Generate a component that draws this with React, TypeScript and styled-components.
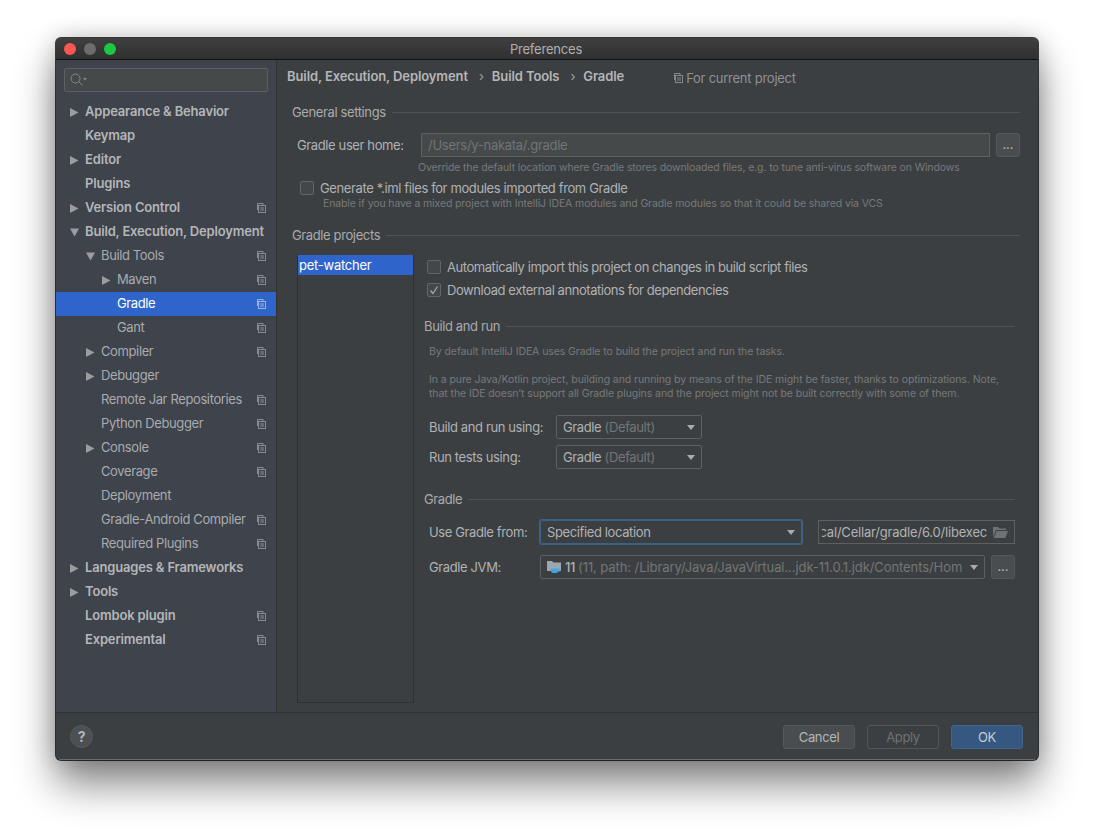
import styled, { createGlobalStyle } from "styled-components";

const GlobalStyle = createGlobalStyle`
  html, body {
    margin: 0;
    padding: 0;
    background: #ffffff;
    height: 100%;
    overflow: hidden;
  }
  #root {
    padding: 38px 0 0 56px;
    font-family: Inter, "Liberation Sans", sans-serif;
    font-size: 13px;
    letter-spacing: -0.38px;
  }
  * {
    box-sizing: border-box;
  }
`;

interface TreeItem {
  label: string;
  depth: number;
  arrow?: "right" | "down";
  copy?: boolean;
  bold?: boolean;
  selected?: boolean;
}

const treeItems: TreeItem[] = [
  { label: "Appearance & Behavior", depth: 0, arrow: "right", bold: true },
  { label: "Keymap", depth: 0, bold: true },
  { label: "Editor", depth: 0, arrow: "right", bold: true },
  { label: "Plugins", depth: 0, bold: true },
  { label: "Version Control", depth: 0, arrow: "right", bold: true, copy: true },
  { label: "Build, Execution, Deployment", depth: 0, arrow: "down", bold: true },
  { label: "Build Tools", depth: 1, arrow: "down", copy: true },
  { label: "Maven", depth: 2, arrow: "right", copy: true },
  { label: "Gradle", depth: 2, copy: true, selected: true },
  { label: "Gant", depth: 2, copy: true },
  { label: "Compiler", depth: 1, arrow: "right", copy: true },
  { label: "Debugger", depth: 1, arrow: "right" },
  { label: "Remote Jar Repositories", depth: 1, copy: true },
  { label: "Python Debugger", depth: 1, copy: true },
  { label: "Console", depth: 1, arrow: "right", copy: true },
  { label: "Coverage", depth: 1, copy: true },
  { label: "Deployment", depth: 1 },
  { label: "Gradle-Android Compiler", depth: 1, copy: true },
  { label: "Required Plugins", depth: 1, copy: true },
  { label: "Languages & Frameworks", depth: 0, arrow: "right", bold: true },
  { label: "Tools", depth: 0, arrow: "right", bold: true },
  { label: "Lombok plugin", depth: 0, bold: true, copy: true },
  { label: "Experimental", depth: 0, bold: true, copy: true },
];

const CopyIcon = ({ color = "#8a8d90" }: { color?: string }) => (
  <svg width="10" height="10" viewBox="0 0 10 10" fill="none" stroke={color} strokeWidth="1">
    <path d="M1.5 7V.5H7V2" />
    <rect x="2.5" y="2.5" width="7" height="7" />
    <path d="M4 5h4M4 7h4" />
  </svg>
);

const Arrow = ({ dir }: { dir: "right" | "down" }) => (
  <svg width="9" height="9" viewBox="0 0 9 9" fill="#9a9c9e">
    {dir === "right" ? <path d="M0 0 8.5 4.5 0 9z" /> : <path d="M0 .5h9L4.5 8.5z" />}
  </svg>
);

const Caret = () => (
  <svg width="8" height="5" viewBox="0 0 8 5" fill="#a9abad">
    <path d="M0 0h8L4 5z" />
  </svg>
);

const TreeRow = ({ item }: { item: TreeItem }) => (
  <Row $depth={item.depth} $selected={item.selected}>
    <ArrowSlot>{item.arrow && <Arrow dir={item.arrow} />}</ArrowSlot>
    <RowLabel $bold={item.bold} $selected={item.selected}>
      {item.label}
    </RowLabel>
    {item.copy && (
      <CopySlot>
        <CopyIcon color={item.selected ? "#9db4d8" : "#8a8d90"} />
      </CopySlot>
    )}
  </Row>
);

export default function App() {
  return (
    <>
      <GlobalStyle />
      <Window>
        <TitleBar>
          <Lights>
            <Light $color="#fc5753" />
            <Light $color="#6b6c6e" />
            <Light $color="#1ac841" />
          </Lights>
          Preferences
        </TitleBar>
        <Body>
          <Sidebar>
            <SearchBox>
              <svg width="17" height="14" viewBox="0 0 17 14" fill="none" stroke="#85888b" strokeWidth="1">
                <circle cx="5.5" cy="5.5" r="4.5" />
                <path d="M8.8 8.8 12.5 12.5" />
                <path d="M13 5h4l-2 2.4z" fill="#85888b" stroke="none" />
              </svg>
            </SearchBox>
            <Tree>
              {treeItems.map((item) => (
                <TreeRow key={item.label} item={item} />
              ))}
            </Tree>
          </Sidebar>
          <Main>
            <Breadcrumb>
              <Crumb>Build, Execution, Deployment</Crumb>
              <Sep>›</Sep>
              <Crumb>Build Tools</Crumb>
              <Sep>›</Sep>
              <Crumb>Gradle</Crumb>
              <ForProject>
                <CopyIcon color="#85888b" />
                For current project
              </ForProject>
            </Breadcrumb>

            <SectionTitle $top={12} $left={5}>General settings</SectionTitle>
            <HomeRow>
              <HomeLabel>Gradle user home:</HomeLabel>
              <DisabledInput>/Users/y-nakata/.gradle</DisabledInput>
              <DotsButton>...</DotsButton>
            </HomeRow>
            <Hint $left={131} $top={3}>
              Override the default location where Gradle stores downloaded files, e.g. to tune anti-virus software on Windows
            </Hint>
            <GenerateRow>
              <CheckBox />
              Generate *.iml files for modules imported from Gradle
            </GenerateRow>
            <Hint $left={36} $top={0}>
              Enable if you have a mixed project with IntelliJ IDEA modules and Gradle modules so that it could be shared via VCS
            </Hint>

            <SectionTitle $top={17} $left={5}>Gradle projects</SectionTitle>
            <Projects>
              <ProjectList>
                <ProjectItem>pet-watcher</ProjectItem>
              </ProjectList>
              <ProjectPane>
                <CheckRow>
                  <CheckBox />
                  Automatically import this project on changes in build script files
                </CheckRow>
                <CheckRow>
                  <CheckBox>
                    <svg width="10" height="10" viewBox="0 0 10 10" fill="none" stroke="#a9abad" strokeWidth="1.2">
                      <path d="M1.5 5.5 4 8.5 8.5 1.5" />
                    </svg>
                  </CheckBox>
                  Download external annotations for dependencies
                </CheckRow>

                <SectionTitle $top={17} $left={0}>Build and run</SectionTitle>
                <Description $top={11}>By default IntelliJ IDEA uses Gradle to build the project and run the tasks.</Description>
                <Description $top={14}>
                  In a pure Java/Kotlin project, building and running by means of the IDE might be faster, thanks to optimizations. Note,
                  <br />
                  that the IDE doesn’t support all Gradle plugins and the project might not be built correctly with some of them.
                </Description>

                <FormRow $top={14}>
                  <FormLabel $width={127}>Build and run using:</FormLabel>
                  <Select $width={146}>
                    <span>
                      Gradle <Muted>(Default)</Muted>
                    </span>
                    <Caret />
                  </Select>
                </FormRow>
                <FormRow $top={6}>
                  <FormLabel $width={127}>Run tests using:</FormLabel>
                  <Select $width={146}>
                    <span>
                      Gradle <Muted>(Default)</Muted>
                    </span>
                    <Caret />
                  </Select>
                </FormRow>

                <SectionTitle $top={22} $left={0}>Gradle</SectionTitle>
                <FormRow $top={13}>
                  <FormLabel $width={111}>Use Gradle from:</FormLabel>
                  <Select $width={262} $focused>
                    <span>Specified location</span>
                    <Caret />
                  </Select>
                  <PathInput>
                    <PathText>
                      <span>/usr/local/Cellar/gradle/6.0/libexec</span>
                    </PathText>
                    <svg width="15" height="12" viewBox="0 0 15 12" fill="#6e7275">
                      <path d="M0 1h5l1.5 1.5H13V4H3L0 11z" />
                      <path d="M3.6 5H15l-2.6 7H.8z" />
                    </svg>
                  </PathInput>
                </FormRow>
                <FormRow $top={11}>
                  <FormLabel $width={111}>Gradle JVM:</FormLabel>
                  <JvmSelect>
                    <JvmText>
                      <svg width="15" height="14" viewBox="0 0 15 14">
                        <path d="M0 1h5l1.5 1.5H14V11H0z" fill="#9aa7b0" />
                        <path d="M4 8.5h7v2.5a2 2 0 0 1-2 2H6a2 2 0 0 1-2-2z" fill="#3ea6e0" />
                        <path d="M11 9h2v2h-2" fill="none" stroke="#3ea6e0" />
                      </svg>
                      <strong>11</strong>
                      <JvmPath>(11, path: /Library/Java/JavaVirtual...jdk-11.0.1.jdk/Contents/Hom</JvmPath>
                    </JvmText>
                    <Caret />
                  </JvmSelect>
                  <DotsButton>...</DotsButton>
                </FormRow>
              </ProjectPane>
            </Projects>
          </Main>
        </Body>
        <Footer>
          <HelpButton>?</HelpButton>
          <Buttons>
            <DialogButton>Cancel</DialogButton>
            <DialogButton $variant="disabled">Apply</DialogButton>
            <DialogButton $variant="primary">OK</DialogButton>
          </Buttons>
        </Footer>
      </Window>
    </>
  );
}

const Window = styled.div`
  width: 982px;
  height: 722px;
  border-radius: 5px;
  overflow: hidden;
  background: #3c3f41;
  box-shadow: 0 0 0 1px rgba(0, 0, 0, 0.75), 0 24px 40px rgba(0, 0, 0, 0.48), 0 0 24px rgba(0, 0, 0, 0.2);
  display: flex;
  flex-direction: column;
  color: #b2b4b6;
`;

const TitleBar = styled.div`
  position: relative;
  height: 22px;
  flex: none;
  background: linear-gradient(#3f3f3f, #303030);
  border-bottom: 1px solid #111;
  color: #b0b0b0;
  display: flex;
  align-items: center;
  justify-content: center;
  padding-right: 2px;
  font-size: 13px;
  letter-spacing: -0.2px;
`;

const Lights = styled.div`
  position: absolute;
  left: 8px;
  top: 5px;
  display: flex;
  gap: 8px;
`;

const Light = styled.span<{ $color: string }>`
  width: 12px;
  height: 12px;
  border-radius: 50%;
  background: ${(p) => p.$color};
`;

const Body = styled.div`
  display: flex;
  height: 652px;
  flex: none;
`;

const Sidebar = styled.div`
  width: 221px;
  flex: none;
  background: #3e434c;
  border-right: 1px solid #323232;
  padding-top: 8px;
`;

const SearchBox = styled.div`
  width: 204px;
  height: 24px;
  margin-left: 8px;
  border: 1px solid #5c6064;
  border-radius: 2px;
  background: #45494a;
  display: flex;
  align-items: center;
  padding-left: 5px;
`;

const Tree = styled.div`
  margin-top: 8px;
`;

const Row = styled.div<{ $depth: number; $selected?: boolean }>`
  height: 24px;
  width: 220px;
  display: flex;
  align-items: center;
  padding-left: ${(p) => 14 + p.$depth * 16}px;
  background: ${(p) => (p.$selected ? "#2f65ca" : "transparent")};
`;

const ArrowSlot = styled.span`
  width: 15px;
  flex: none;
  display: flex;
  align-items: center;
`;

const RowLabel = styled.span<{ $bold?: boolean; $selected?: boolean }>`
  font-weight: ${(p) => (p.$bold ? 600 : 400)};
  letter-spacing: ${(p) => (p.$bold ? "-0.17px" : "-0.38px")};
  color: ${(p) => (p.$selected ? "#ffffff" : p.$bold ? "#b4b6b8" : "#a9abad")};
  white-space: nowrap;
  position: relative;
  top: -1px;
`;

const CopySlot = styled.span`
  margin-left: auto;
  margin-right: 10px;
  display: flex;
`;

const Main = styled.div`
  flex: 1;
  min-width: 0;
  padding: 0 18px 0 10px;
  display: flex;
  flex-direction: column;
`;

const Breadcrumb = styled.div`
  height: 32px;
  flex: none;
  display: flex;
  align-items: center;
  font-weight: 600;
  letter-spacing: -0.1px;
`;

const Crumb = styled.span`
  color: #b4b6b8;
`;

const Sep = styled.span`
  margin: 0 8px 0 11px;
  font-weight: 400;
  color: #a0a2a4;
`;

const ForProject = styled.span`
  display: flex;
  align-items: center;
  gap: 3px;
  margin-left: 49px;
  font-weight: 400;
  letter-spacing: -0.25px;
  color: #8f9194;
  position: relative;
  top: 2px;
`;

const SectionTitle = styled.div<{ $top: number; $left: number }>`
  height: 16px;
  flex: none;
  margin-top: ${(p) => p.$top}px;
  margin-left: ${(p) => p.$left}px;
  display: flex;
  align-items: center;
  gap: 6px;
  color: #a9abad;
  white-space: nowrap;

  &::after {
    content: "";
    flex: 1;
    height: 1px;
    background: #505254;
  }
`;

const HomeRow = styled.div`
  display: flex;
  align-items: center;
  height: 24px;
  margin-top: 13px;
  flex: none;
`;

const HomeLabel = styled.span`
  width: 124px;
  margin-left: 10px;
  flex: none;
  color: #b0b2b4;
`;

const DisabledInput = styled.div`
  width: 569px;
  height: 24px;
  border: 1px solid #5e6060;
  background: #45494a;
  color: #727476;
  padding-left: 6px;
  letter-spacing: -0.28px;
  display: flex;
  align-items: center;
`;

const DotsButton = styled.div`
  width: 24px;
  height: 24px;
  flex: none;
  margin-left: 6px;
  border: 1px solid #555759;
  border-radius: 3px;
  background: #4a4d4f;
  color: #b4b6b8;
  display: flex;
  align-items: center;
  justify-content: center;
  padding-bottom: 2px;
  letter-spacing: 0;
`;

const Hint = styled.div<{ $left: number; $top: number }>`
  height: 14px;
  line-height: 14px;
  padding-top: 1px;
  flex: none;
  margin-top: ${(p) => p.$top}px;
  margin-left: ${(p) => p.$left}px;
  font-size: 10.5px;
  letter-spacing: -0.12px;
  color: #77797b;
  white-space: nowrap;
`;

const CheckBox = styled.span`
  width: 14px;
  height: 14px;
  flex: none;
  border: 1px solid #626466;
  border-radius: 2px;
  background: #43474a;
  display: flex;
  align-items: center;
  justify-content: center;
`;

const GenerateRow = styled.div`
  display: flex;
  align-items: center;
  gap: 6px;
  height: 16px;
  flex: none;
  margin: 6px 0 0 13px;
  color: #b0b2b4;
`;

const Projects = styled.div`
  display: flex;
  height: 448px;
  flex: none;
  margin: 12px 0 0 10px;
`;

const ProjectList = styled.div`
  width: 117px;
  flex: none;
  border: 1px solid #2f3133;
  border-top: none;
`;

const ProjectItem = styled.div`
  height: 20px;
  background: #2f65ca;
  color: #ffffff;
  display: flex;
  align-items: center;
  padding-left: 1px;
  letter-spacing: -0.25px;
`;

const ProjectPane = styled.div`
  flex: 1;
  min-width: 0;
  padding: 0 5px 0 10px;
  display: flex;
  flex-direction: column;
`;

const CheckRow = styled.div`
  display: flex;
  align-items: center;
  gap: 6px;
  height: 23px;
  flex: none;
  padding-left: 3px;
  color: #b0b2b4;
  letter-spacing: -0.44px;
`;

const Description = styled.div<{ $top: number }>`
  margin-top: ${(p) => p.$top}px;
  margin-left: 5px;
  font-size: 10.5px;
  line-height: 14px;
  letter-spacing: -0.08px;
  color: #77797b;
  white-space: nowrap;
  flex: none;
`;

const FormRow = styled.div<{ $top: number }>`
  display: flex;
  align-items: center;
  height: 24px;
  flex: none;
  margin-top: ${(p) => p.$top}px;
  margin-left: 5px;
`;

const FormLabel = styled.span<{ $width: number }>`
  width: ${(p) => p.$width}px;
  flex: none;
  color: #b0b2b4;
`;

const Select = styled.div<{ $width: number; $focused?: boolean }>`
  width: ${(p) => p.$width}px;
  height: 24px;
  flex: none;
  border: 1px solid ${(p) => (p.$focused ? "#3d6185" : "#5e6060")};
  box-shadow: ${(p) => (p.$focused ? "0 0 0 1px #3d6185" : "none")};
  border-radius: 2px;
  display: flex;
  align-items: center;
  justify-content: space-between;
  padding: 0 6px;
  color: #b0b2b4;
`;

const Muted = styled.span`
  color: #737577;
  font-weight: 400;
`;

const PathInput = styled.div`
  width: 197px;
  height: 24px;
  flex: none;
  margin-left: 16px;
  border: 1px solid #5e6060;
  display: flex;
  align-items: center;
  justify-content: space-between;
  padding: 0 6px 0 3px;
  color: #b0b2b4;
  letter-spacing: -0.2px;
`;

const PathText = styled.div`
  width: 165px;
  overflow: hidden;
  display: flex;
  justify-content: flex-end;
  white-space: nowrap;
`;

const JvmSelect = styled.div`
  width: 445px;
  height: 24px;
  flex: none;
  border: 1px solid #5e6060;
  border-radius: 2px;
  display: flex;
  align-items: center;
  justify-content: space-between;
  padding: 0 6px;
  color: #b0b2b4;
`;

const JvmText = styled.span`
  display: flex;
  align-items: center;
  gap: 3px;
  white-space: nowrap;

  strong {
    font-weight: 500;
  }
`;

const JvmPath = styled.span`
  color: #737577;
  letter-spacing: -0.08px;
`;

const Footer = styled.div`
  flex: 1;
  display: flex;
  align-items: center;
  justify-content: space-between;
  padding: 0 15px 0 14px;
  background: #3c3f41;
  border-top: 1px solid #323232;
  box-shadow: inset 0 -1px 0 #6a6c6e;
`;

const HelpButton = styled.div`
  width: 23px;
  height: 23px;
  border-radius: 50%;
  background: #4d5052;
  border: 1px solid #56595b;
  color: #b4b6b8;
  font-weight: 700;
  font-size: 14px;
  display: flex;
  align-items: center;
  justify-content: center;
`;

const Buttons = styled.div`
  display: flex;
  gap: 12px;
`;

const buttonColors = {
  default: { bg: "#4a4d4f", border: "#565859", text: "#b4b6b8" },
  disabled: { bg: "transparent", border: "#535557", text: "#6f7173" },
  primary: { bg: "#365880", border: "#42648c", text: "#c4cdd6" },
};

const DialogButton = styled.div<{ $variant?: "default" | "disabled" | "primary" }>`
  width: 72px;
  height: 24px;
  border-radius: 3px;
  border: 1px solid ${(p) => buttonColors[p.$variant ?? "default"].border};
  background: ${(p) => buttonColors[p.$variant ?? "default"].bg};
  color: ${(p) => buttonColors[p.$variant ?? "default"].text};
  display: flex;
  align-items: center;
  justify-content: center;
`;
